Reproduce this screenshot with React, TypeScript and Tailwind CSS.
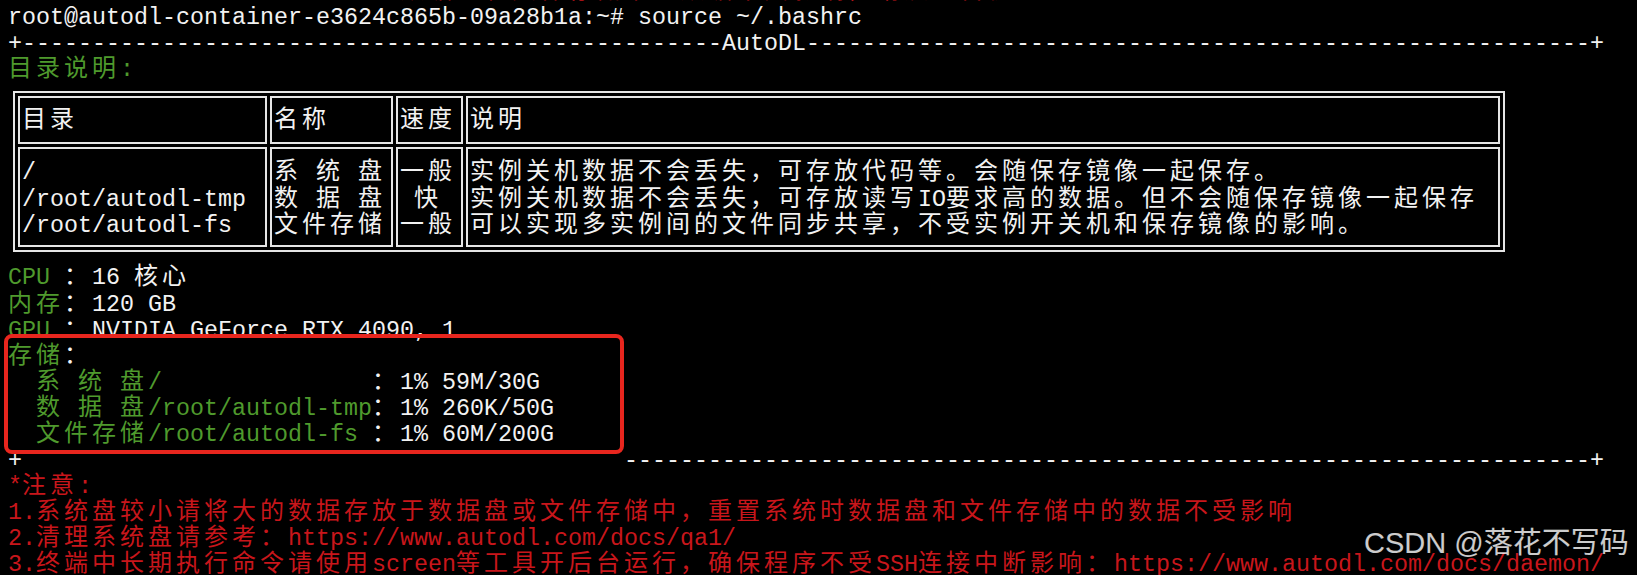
import React from 'react'

const CJK = /([\u2E80-\u9FFF\u3000-\u303F\uFF00-\uFFEF]+)/

// ascii cells are 14px wide, full width glyphs take two cells
function T( { text }: { text: string } ) {
    const parts = text.split( CJK )
    return (
        <>
            {parts.map( ( part, i ) =>
                i % 2 === 1 ? (
                    <span key={i} className="font-['Noto_Sans_CJK_SC',sans-serif] text-[24px] leading-[16px] tracking-[4px]">{part}</span>
                ) : (
                    <span key={i}>{part}</span>
                )
            )}
        </>
    )
}

function Line( { children }: { children?: React.ReactNode } ) {
    return <div className="h-[26.05px] whitespace-pre">{children}</div>
}

const G = ( { t }: { t: string } ) => <span className="text-[#4f9a2d]"><T text={t} /></span>
const W = ( { t }: { t: string } ) => <span className="text-[#f2f2f2]"><T text={t} /></span>

type Cell = { head: string, rows: string[] }

const columns: Cell[] = [
    { head: '目录', rows: ['/', '/root/autodl-tmp', '/root/autodl-fs'] },
    { head: '名称', rows: ['系 统 盘', '数 据 盘', '文件存储'] },
    { head: '速度', rows: ['一般', ' 快 ', '一般'] },
    {
        head: '说明', rows: [
            '实例关机数据不会丢失，可存放代码等。会随保存镜像一起保存。',
            '实例关机数据不会丢失，可存放读写IO要求高的数据。但不会随保存镜像一起保存',
            '可以实现多实例间的文件同步共享，不受实例开关机和保存镜像的影响。',
        ]
    },
]

const notes = [
    '*注意:',
    '1.系统盘较小请将大的数据存放于数据盘或文件存储中，重置系统时数据盘和文件存储中的数据不受影响',
    '2.清理系统盘请参考：https://www.autodl.com/docs/qa1/',
    '3.终端中长期执行命令请使用screen等工具开后台运行，确保程序不受SSH连接中断影响：https://www.autodl.com/docs/daemon/',
]

function DirTable() {
    return (
        <div className="h-[182.35px] pt-[7.85px] pl-[5px]">
            <div className="w-[1492px] h-[161px] border-2 border-[#e6e6e6] p-[3px] grid grid-cols-[249px_123px_67px_1fr] grid-rows-[48px_100px] gap-[3px]">
                {columns.map( ( col, idx ) => (
                    <div key={'h' + idx} className="border-2 border-[#e6e6e6] pl-[2px] pt-[9.6px]">
                        <Line><T text={col.head} /></Line>
                    </div>
                ) )}
                {columns.map( ( col, idx ) => (
                    <div key={'d' + idx} className="border-2 border-[#e6e6e6] pl-[2px] pt-[11.5px]">
                        {col.rows.map( ( r, i ) => <Line key={i}><T text={r} /></Line> )}
                    </div>
                ) )}
            </div>
        </div>
    )
}

export default function App() {
    return (
        <div className="relative w-full h-[575px] overflow-hidden bg-black pl-[8px] font-['Liberation_Mono',monospace] text-[23.33px] leading-[26.05px] text-[#f2f2f2]">
            {/* tail of the previous output line, cut by the screenshot edge */}
            <div className="h-[5px] overflow-hidden text-[#c8161b]">
                <div className="-mt-[21px] h-[26.05px] whitespace-pre">
                    <T text={' '.repeat( 28 ) + '数据盘和文件存储中的数据不受影响，请及时备份'} />
                </div>
            </div>

            <Line><W t="root@autodl-container-e3624c865b-09a28b1a:~# source ~/.bashrc" /></Line>
            <Line><W t={'+' + '-'.repeat( 50 ) + 'AutoDL' + '-'.repeat( 56 ) + '+'} /></Line>
            <Line><G t="目录说明:" /></Line>

            <DirTable />

            <Line><G t="CPU " /><W t="：16 核心" /></Line>
            <Line><G t="内存" /><W t="：120 GB" /></Line>
            <Line><G t="GPU " /><W t="：NVIDIA GeForce RTX 4090, 1" /></Line>
            <Line><G t="存储" /><W t="：" /></Line>
            <Line><G t={'  系 统 盘/' + ' '.repeat( 15 )} /><W t="：1% 59M/30G" /></Line>
            <Line><G t="  数 据 盘/root/autodl-tmp" /><W t="：1% 260K/50G" /></Line>
            <Line><G t="  文件存储/root/autodl-fs " /><W t="：1% 60M/200G" /></Line>
            <Line><W t={'+' + ' '.repeat( 43 ) + '-'.repeat( 69 ) + '+'} /></Line>

            {notes.map( ( n, i ) => (
                <Line key={i}><span className="text-[#c8161b]"><T text={n} /></span></Line>
            ) )}

            {/* annotation box */}
            <div className="absolute left-[4px] top-[334px] w-[620px] h-[120px] border-[4.5px] border-[#e8261e] rounded-[8px]" />

            {/* watermark */}
            <div className="absolute left-[1364px] top-[529px] whitespace-pre text-[29px] leading-none font-['Liberation_Sans','Noto_Sans_CJK_SC',sans-serif] text-white/80">
                CSDN @落花不写码
            </div>
        </div>
    )
}
